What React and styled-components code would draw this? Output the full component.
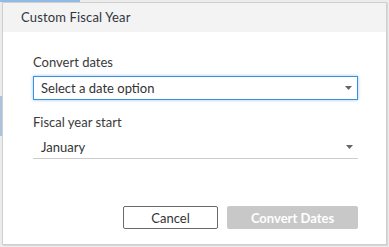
import React from "react";
import styled, { createGlobalStyle } from "styled-components";

const Global = createGlobalStyle`
  html, body { margin: 0; padding: 0; }
  body {
    width: 389px;
    height: 247px;
    overflow: hidden;
    font-family: Lato, "Noto Sans", sans-serif;
    background:
      linear-gradient(#8fbbe6, #8fbbe6) 0 0 / 80px 2px no-repeat,
      linear-gradient(#a9c3dd, #a9c3dd) 0 96px / 2px 40px no-repeat,
      #ececec;
  }
  * { box-sizing: border-box; }
`;

const Dialog = styled.div`
  margin: 2px 0 0 2px;
  width: 385px;
  height: 243px;
  background: #fff;
  border: 1px solid #cfcfcf;
  box-shadow: 1px 1px 0 #d8d8d8;
  display: flex;
  flex-direction: column;
`;

const Header = styled.div`
  height: 29px;
  line-height: 29px;
  padding-left: 18px;
  background: #f3f3f3;
  color: #2f3640;
  font-size: 13px;
  letter-spacing: 0.15px;
`;

const Body = styled.div`
  flex: 1;
  display: flex;
  flex-direction: column;
  padding: 22px 28px 0 30px;
`;

const Label = styled.div`
  font-size: 13px;
  line-height: 16px;
  color: #3a3a3a;
  margin-top: ${(p) => p.$top || 0}px;
`;

const Select = styled.div`
  margin-top: 6px;
  height: ${(p) => (p.$focused ? 24 : 23)}px;
  display: flex;
  align-items: center;
  justify-content: space-between;
  padding: ${(p) => (p.$focused ? "0 5px 0 7px" : "0 5px 0 8px")};
  font-size: 13px;
  color: #333;
  background: #fff;
  border: ${(p) => (p.$focused ? "1px solid #3d8fe0" : "none")};
  border-bottom: 1px solid ${(p) => (p.$focused ? "#3d8fe0" : "#cccccc")};
  box-shadow: ${(p) => (p.$focused ? "0 0 3px rgba(61,143,224,0.55)" : "none")};
`;

const Caret = styled.svg`
  width: 7px;
  height: 4px;
  flex: none;
`;

const Footer = styled.div`
  margin-top: 47px;
  display: flex;
  justify-content: flex-end;
  gap: 9px;
`;

const Button = styled.button`
  height: 23px;
  width: ${(p) => p.$w}px;
  border-radius: 2px;
  font-family: Lato, "Noto Sans", sans-serif;
  font-size: 13px;
  padding: 0;
  border: 1px solid ${(p) => (p.$primary ? "#c8c8c8" : "#6a6a6a")};
  background: ${(p) => (p.$primary ? "#c8c8c8" : "#fff")};
  color: ${(p) => (p.$primary ? "#fff" : "#333")};
  font-weight: ${(p) => (p.$primary ? 700 : 400)};
`;

const Arrow = () => (
  <Caret viewBox="0 0 7 4">
    <path d="M0 0 H7 L3.5 4 Z" fill="#666" />
  </Caret>
);

export default function App() {
  return (
    <>
      <Global />
      <Dialog>
        <Header>Custom Fiscal Year</Header>
        <Body>
          <Label>Convert dates</Label>
          <Select $focused>
            <span>Select a date option</span>
            <Arrow />
          </Select>
          <Label $top={14}>Fiscal year start</Label>
          <Select>
            <span>January</span>
            <Arrow />
          </Select>
          <Footer>
            <Button $w={95}>Cancel</Button>
            <Button $w={131} $primary>Convert Dates</Button>
          </Footer>
        </Body>
      </Dialog>
    </>
  );
}
